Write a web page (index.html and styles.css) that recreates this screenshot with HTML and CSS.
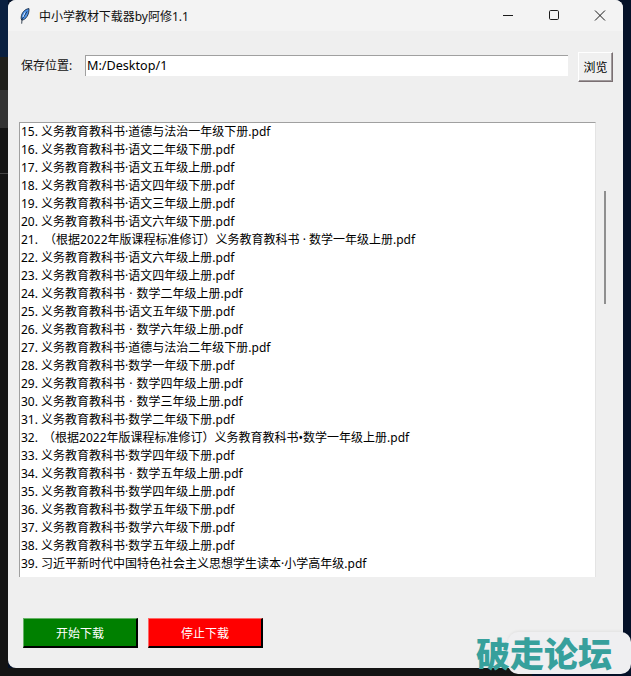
FILE: index.html
```html
<!DOCTYPE html>
<html lang="zh">
<head>
<meta charset="utf-8">
<title>中小学教材下载器by阿修1.1</title>
<link rel="stylesheet" href="styles.css">
</head>
<body>
<div class="window">
  <header class="titlebar">
    <svg class="app-icon" width="10" height="16" viewBox="0 0 10 16"><path d="M9 .6C5 1 1.700 4.500 1.200 9c-.2 1.500 0 2.500.6 3.100C6 11.800 9.300 6.500 9 .6z" fill="#4a90e6" stroke="#0c1c30" stroke-width=".8"/><path d="M7 3.500 2 11.500 1.700 15.700" stroke="#0c1c30" stroke-width=".8" fill="none"/><path d="M5 4.500 3 9" stroke="#d5e8ff" stroke-width="1"/></svg>
    <span class="title">中小学教材下载器by阿修1.1</span>
    <div class="controls">
      <svg class="ctl" width="46" height="31" viewBox="0 0 46 31"><path d="M18 15.500h10" stroke="#1a1a1a" stroke-width="1"/></svg>
      <svg class="ctl" width="46" height="31" viewBox="0 0 46 31"><rect x="18.500" y="10.500" width="9" height="9" rx="1.200" fill="none" stroke="#1a1a1a"/></svg>
      <svg class="ctl" width="46" height="31" viewBox="0 0 46 31"><path d="M18 10.500l10 10M28 10.500l-10 10" stroke="#1a1a1a" stroke-width="1" fill="none"/></svg>
    </div>
  </header>
  <main class="content">
    <div class="path-row">
      <label class="path-label">保存位置:</label>
      <div class="path-input">M:/Desktop/1</div>
      <button class="browse">浏览</button>
    </div>
    <div class="list-row">
      <div class="list-box">
        <ul class="list">
          <li>15. 义务教育教科书·道德与法治一年级下册.pdf</li>
          <li>16. 义务教育教科书·语文二年级下册.pdf</li>
          <li>17. 义务教育教科书·语文五年级上册.pdf</li>
          <li>18. 义务教育教科书·语文四年级下册.pdf</li>
          <li>19. 义务教育教科书·语文三年级上册.pdf</li>
          <li>20. 义务教育教科书·语文六年级下册.pdf</li>
          <li>21. <span class="gap3">（根据2022年版课程标准修订）义务教育教科书 · 数学一年级上册.pdf</span></li>
          <li>22. 义务教育教科书·语文六年级上册.pdf</li>
          <li>23. 义务教育教科书·语文四年级上册.pdf</li>
          <li>24. 义务教育教科书<span class="sep"> · </span>数学二年级上册.pdf</li>
          <li>25. 义务教育教科书·语文五年级下册.pdf</li>
          <li>26. 义务教育教科书<span class="sep"> · </span>数学六年级上册.pdf</li>
          <li>27. 义务教育教科书·道德与法治二年级下册.pdf</li>
          <li>28. 义务教育教科书·数学一年级下册.pdf</li>
          <li>29. 义务教育教科书<span class="sep"> · </span>数学四年级上册.pdf</li>
          <li>30. 义务教育教科书<span class="sep"> · </span>数学三年级上册.pdf</li>
          <li>31. 义务教育教科书·数学二年级下册.pdf</li>
          <li>32. <span class="gap2">（根据2022年版课程标准修订）义务教育教科书•数学一年级上册.pdf</span></li>
          <li>33. 义务教育教科书·数学四年级下册.pdf</li>
          <li>34. 义务教育教科书<span class="sep"> · </span>数学五年级上册.pdf</li>
          <li>35. 义务教育教科书·数学四年级上册.pdf</li>
          <li>36. 义务教育教科书·数学五年级下册.pdf</li>
          <li>37. 义务教育教科书·数学六年级下册.pdf</li>
          <li>38. 义务教育教科书·数学五年级上册.pdf</li>
          <li>39. 习近平新时代中国特色社会主义思想学生读本·小学高年级.pdf</li>
        </ul>
      </div>
      <div class="scrollbar"><div class="thumb"></div></div>
    </div>
    <div class="actions">
      <button class="action start">开始下载</button>
      <button class="action stop">停止下载</button>
    </div>
  </main>
</div>
<div class="watermark">破走论坛</div>
</body>
</html>
```
FILE: styles.css
```css
* { box-sizing: border-box; }
html, body { margin: 0; height: 100%; }
body {
  width: 631px;
  height: 676px;
  overflow: hidden;
  position: relative;
  font-family: "Noto Sans", "Noto Sans CJK SC", sans-serif;
  font-size: 12px;
  color: #111;
  background-color: #041128;
  background-image:
    linear-gradient(#141414, #141414),
    linear-gradient(180deg, #0a2040 0, #0a2040 57px, #20201c 57px, #20201c 90px, #333 90px, #333 128px, #141414 128px, #141414 173px, #444 173px, #444 174px, #141414 174px);
  background-size: 532px 8px, 8px 100%;
  background-position: 0 100%, 0 0;
  background-repeat: no-repeat;
}
.window {
  margin-left: 8px;
  width: 615px;
  height: 668px;
  background: #efefef;
  border-radius: 8px 8px 0 8px;
  overflow: hidden;
  display: flex;
  flex-direction: column;
}
.titlebar {
  height: 31px;
  background: #f3f3f3;
  display: flex;
  align-items: center;
  padding-left: 12px;
  flex: none;
}
.app-icon { flex: none; }
.title { margin-left: 9px; font-size: 12px; color: #111; letter-spacing: -0.03px; }
.controls { margin-left: auto; display: flex; }
.ctl { display: block; }
.content { flex: 1; display: flex; flex-direction: column; min-height: 0; }
.path-row {
  display: flex;
  align-items: flex-start;
  padding: 21px 10px 0 13px;
  height: 91px;
  flex: none;
}
.path-label { width: 64px; line-height: 27px; flex: none; }
.path-input {
  width: 483px;
  height: 21px;
  margin-top: 3px;
  background: #fff;
  border-top: 1px solid #a0a0a0;
  border-left: 1px solid #a0a0a0;
  padding-left: 1px;
  font-size: 12.6px;
  line-height: 20px;
  color: #000;
  flex: none;
}
.browse {
  margin-left: 10px;
  width: 35px;
  height: 30px;
  padding: 0;
  background: #f0f0f0;
  border: 1px solid;
  border-color: #fff #7a6f72 #7a6f72 #fff;
  box-shadow: inset -1px -1px 0 #a09a9c;
  font: inherit;
  color: #000;
  flex: none;
}
.list-row { display: flex; padding-left: 11px; flex: none; height: 455px; }
.list-box {
  width: 577px;
  height: 455px;
  padding-left: 1px;
  background: #fff;
  border-top: 1px solid #a0a0a0;
  border-left: 1px solid #a0a0a0;
  border-right: 1px solid #e4e4e4;
  flex: none;
}
.list {
  list-style: none;
  margin: 0;
  padding: 0;
  height: 452px;
  overflow: hidden;
}
.list li { height: 18px; line-height: 17px; white-space: nowrap; color: #000; }
.gap3 { margin-left: 3px; }
.gap2 { margin-left: 2px; }
.sep { margin: 0 1px; }
.scrollbar { flex: 1; padding: 69px 0 0 8px; }
.thumb { width: 2px; height: 113px; background: #8f8f8f; }
.actions { display: flex; gap: 10px; padding: 41px 0 0 15px; }
.action {
  width: 115px;
  height: 30px;
  padding: 0;
  font: inherit;
  color: #fff;
  border: 1px solid;
  border-width: 1px 2px 2px 1px;
  border-right-color: #000;
  border-bottom-color: #000;
}
.start { background: #008000; border-top-color: #66b366; border-left-color: #66b366; }
.stop { background: #ff0000; border-top-color: #ff6666; border-left-color: #ff6666; }
.watermark {
  position: absolute;
  left: 476px;
  top: 632px;
  width: 155px;
  height: 42px;
  isolation: isolate;
  font-family: "Noto Sans CJK SC", sans-serif;
  font-weight: 900;
  font-size: 34px;
  line-height: 42px;
  color: #37a09c;
  white-space: nowrap;
}
.watermark::before {
  content: "";
  position: absolute;
  z-index: -1;
  left: 32px;
  top: 0;
  right: 0;
  bottom: 0;
  background: #efeff1;
  border-radius: 10px;
  box-shadow: 0 -1px 3px rgba(0, 0, 0, 0.06);
}
```
